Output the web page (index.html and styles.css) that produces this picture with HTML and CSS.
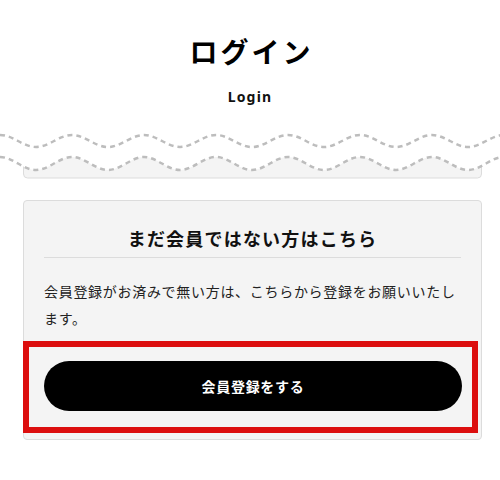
FILE: index.html
```html
<!DOCTYPE html>
<html lang="ja">
<head>
<meta charset="utf-8">
<title>ログイン</title>
<link rel="stylesheet" href="styles.css">
</head>
<body>
<header class="page-head">
  <h1 class="title">ログイン</h1>
  <p class="subtitle">Login</p>
</header>
<svg class="wave" width="500" height="55" viewBox="0 0 500 55" aria-hidden="true">
  <defs>
    <clipPath id="below">
      <path d="M0 32 C13 32 23 45 36 45 S59 32 72 32 S95 45 108 45 S131 32 144 32 S167 45 180 45 S203 32 216 32 S239 45 252 45 S275 32 288 32 S311 45 324 45 S347 32 360 32 S383 45 396 45 S419 32 432 32 S455 45 468 45 S491 32 504 32 L504 60 L0 60 Z"/>
    </clipPath>
  </defs>
  <rect x="23.5" y="0" width="458" height="53" rx="4" fill="#f4f4f4" stroke="#dcdcdc" clip-path="url(#below)"/>
  <path d="M0 10 C13 10 23 22 36 22 S59 10 72 10 S95 22 108 22 S131 10 144 10 S167 22 180 22 S203 10 216 10 S239 22 252 22 S275 10 288 10 S311 22 324 22 S347 10 360 10 S383 22 396 22 S419 10 432 10 S455 22 468 22 S491 10 504 10" fill="none" stroke="#bdbdbd" stroke-width="2.5" stroke-dasharray="5 4"/>
  <path d="M0 32 C13 32 23 45 36 45 S59 32 72 32 S95 45 108 45 S131 32 144 32 S167 45 180 45 S203 32 216 32 S239 45 252 45 S275 32 288 32 S311 45 324 45 S347 32 360 32 S383 45 396 45 S419 32 432 32 S455 45 468 45 S491 32 504 32" fill="none" stroke="#bdbdbd" stroke-width="2.5" stroke-dasharray="5 4"/>
</svg>
<section class="card">
  <h2 class="card-title">まだ会員ではない方はこちら</h2>
  <p class="card-text">会員登録がお済みで無い方は、こちらから登録をお願いいたします。</p>
  <div class="highlight">
    <a class="btn" href="#">会員登録をする</a>
  </div>
</section>
</body>
</html>
```
FILE: styles.css
```css
html, body {
  margin: 0;
  padding: 0;
  background: #fff;
}
body {
  width: 500px;
  font-family: "Noto Sans CJK JP", "Noto Sans", sans-serif;
  color: #111;
}
.page-head {
  padding-top: 30px;
  text-align: center;
}
.title {
  margin: 0;
  font-size: 28px;
  line-height: 42px;
  font-weight: 700;
  letter-spacing: 3px;
  padding-left: 3px;
  color: #000;
}
.subtitle {
  margin: 14px 0 0;
  font-family: "Noto Sans", sans-serif;
  font-size: 14px;
  line-height: 21px;
  font-weight: 700;
  letter-spacing: 1.2px;
  color: #111;
}
.wave {
  display: block;
  margin-top: 18px;
}
.card {
  margin: 20px 18px 0 23px;
  background: #f4f4f4;
  border: 1px solid #dcdcdc;
  border-radius: 4px;
  padding: 24px 20px 6px 20px;
}
.card-title {
  margin: 0;
  padding-bottom: 5px;
  border-bottom: 1px solid #dcdcdc;
  text-align: center;
  font-size: 18px;
  line-height: 27px;
  font-weight: 700;
  letter-spacing: 1.2px;
  color: #111;
}
.card-text {
  margin: 20px 0 0;
  font-size: 14px;
  line-height: 27px;
  letter-spacing: 0.7px;
  color: #222;
}
.highlight {
  margin: 9px -17px 0 -21px;
  border: 6px solid #dc0e0e;
  padding: 14px 10px 16px 15px;
}
.btn {
  display: flex;
  align-items: center;
  justify-content: center;
  height: 50px;
  border-radius: 25px;
  background: #000;
  color: #fff;
  text-decoration: none;
  font-size: 14px;
  font-weight: 700;
  letter-spacing: 0.7px;
}
```
